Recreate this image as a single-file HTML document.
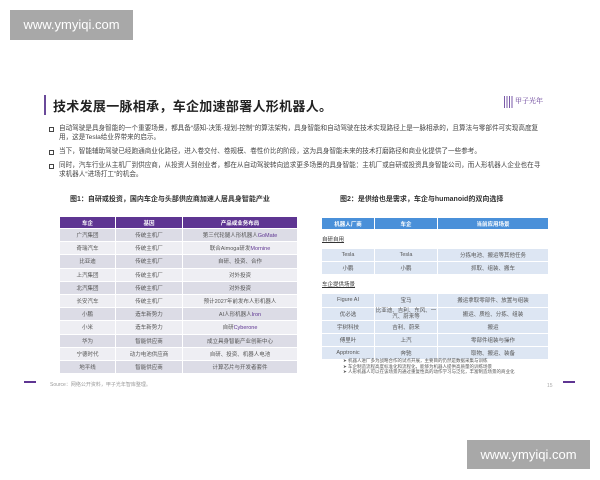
<!DOCTYPE html>
<html><head><meta charset="utf-8"><style>
*{margin:0;padding:0;box-sizing:border-box}
body{width:600px;height:480px;background:#fff;position:relative;overflow:hidden;font-family:"Liberation Sans","Noto Sans CJK SC",sans-serif;color:#333}
.a{position:absolute}
.wm{background:#a8a8a8;color:#fff;font-size:13px;text-align:center;line-height:30px}
.t{font-size:13px;font-weight:bold;color:#222;left:53px;top:96px;letter-spacing:0.3px}
.p{font-size:6.6px;line-height:8.6px;color:#444;left:59px;width:482px}
.sq{position:absolute;left:-10px;top:1.5px;width:5px;height:5px;border:1px solid #444}
table{border-collapse:separate;border-spacing:1px;font-size:5.5px;text-align:center;color:#555}
td{height:12.2px;padding:0}
.t1 th{background:#5e3592;color:#fff;height:11px;font-weight:bold}
.t1 tr:nth-child(even) td{background:#dcdce6}
.t1 tr:nth-child(odd) td{background:#eeeef3}
.t2 th{background:#4a90d9;color:#fff;height:11px;font-weight:bold}
.t2 td{background:#dde6f3}
.cap{font-size:7px;font-weight:bold;color:#333}
</style></head><body>
<div class="a wm" style="left:10px;top:10px;width:123px;height:30px">www.ymyiqi.com</div>
<div class="a wm" style="left:467px;top:440px;width:123px;height:29px">www.ymyiqi.com</div>

<div class="a" style="left:44px;top:95px;width:2px;height:20px;background:#6a4a9a"></div>
<div class="a t">技术发展一脉相承，车企加速部署人形机器人。</div>
<div class="a" style="left:504px;top:96px;width:9px;height:12px;background:repeating-linear-gradient(90deg,#7a5aa8 0 1px,transparent 1px 2.5px)"></div>
<div class="a" style="left:515px;top:96px;font-size:7px;color:#5e3592;font-family:'Noto Serif CJK SC',serif">甲子光年</div>

<div class="a p" style="top:125px"><span class="sq"></span>自动驾驶是具身智能的一个重要场景，都具备“感知-决策-规划-控制”的算法架构，具身智能和自动驾驶在技术实现路径上是一脉相承的，且算法与零部件可实现高度复用，这是Tesla给业界带来的启示。</div>
<div class="a p" style="top:148px"><span class="sq"></span>当下，智能辅助驾驶已经跑通商业化路径，进入卷交付、卷规模、卷性价比的阶段，这为具身智能未来的技术打磨路径和商业化提供了一些参考。</div>
<div class="a p" style="top:162px"><span class="sq"></span>同时，汽车行业从主机厂到供应商，从投资人到创业者，都在从自动驾驶转向追求更多场景的具身智能：主机厂或自研或投资具身智能公司，而人形机器人企业也在寻求机器人“进场打工”的机会。</div>

<div class="a cap" style="left:70px;top:194px">图1：自研或投资，国内车企与头部供应商加速人居具身智能产业</div>
<div class="a cap" style="left:340px;top:194px">图2：是供给也是需求，车企与humanoid的双向选择</div>

<table class="a t1" style="left:59px;top:216px;width:239px">
<tr><th style="width:55px">车企</th><th style="width:66px">基因</th><th>产品或业务布局</th></tr>
<tr><td>广汽集团</td><td>传统主机厂</td><td>第三代轮腿人形机器人<span style="color:#5e3592">GoMate</span></td></tr>
<tr><td>奇瑞汽车</td><td>传统主机厂</td><td>联合Aimoga研发<span style="color:#5e3592">Mornine</span></td></tr>
<tr><td>比亚迪</td><td>传统主机厂</td><td>自研、投资、合作</td></tr>
<tr><td>上汽集团</td><td>传统主机厂</td><td>对外投资</td></tr>
<tr><td>北汽集团</td><td>传统主机厂</td><td>对外投资</td></tr>
<tr><td>长安汽车</td><td>传统主机厂</td><td>预计2027年前发布人形机器人</td></tr>
<tr><td>小鹏</td><td>造车新势力</td><td>AI人形机器人<span style="color:#5e3592">Iron</span></td></tr>
<tr><td>小米</td><td>造车新势力</td><td>自研<span style="color:#5e3592">Cyberone</span></td></tr>
<tr><td>华为</td><td>智能供应商</td><td>成立具身智能产业创新中心</td></tr>
<tr><td>宁德时代</td><td>动力电池供应商</td><td>自研、投资、机器人电池</td></tr>
<tr><td>地平线</td><td>智能供应商</td><td>计算芯片与开发者套件</td></tr>
</table>

<table class="a t2" style="left:321px;top:217px;width:228px">
<tr><th style="width:52px">机器人厂商</th><th style="width:62px">车企</th><th>当前应用场景</th></tr>
<tr><td colspan="3" style="background:#fff;text-align:left;height:18px;text-decoration:underline;color:#333">自研自用</td></tr>
<tr><td>Tesla</td><td>Tesla</td><td>分拣电池、搬运等其他任务</td></tr>
<tr><td>小鹏</td><td>小鹏</td><td>抓取、组装、搬车</td></tr>
<tr><td colspan="3" style="background:#fff;text-align:left;height:18px;text-decoration:underline;color:#333">车企提供场景</td></tr>
<tr><td>Figure AI</td><td>宝马</td><td>搬运拿取零部件、放置与组装</td></tr>
<tr><td>优必选</td><td style="line-height:6px">比亚迪、吉利、东风、一汽、蔚来等</td><td>搬运、质检、分拣、组装</td></tr>
<tr><td>宇树科技</td><td>吉利、蔚来</td><td>搬运</td></tr>
<tr><td>傅里叶</td><td>上汽</td><td>零部件组装与操作</td></tr>
<tr><td>Apptronic</td><td>奔驰</td><td>取物、搬运、装备</td></tr>
</table>
<div class="a" style="left:343px;top:358px;font-size:4.5px;line-height:5.5px;color:#555">
➤ 机器人进厂多为战略合作的试点开展，主要目的仍然是数据采集与训练<br>
➤ 车企制造流程高度标准化和流程化，能够为机器人提供高质量的训练场景<br>
➤ 人形机器人可以在该场景内通过重复性高的动作学习与泛化，丰富制造场景的商业化</div>

<div class="a" style="left:24px;top:381px;width:12px;height:2px;background:#5e3592"></div>
<div class="a" style="left:50px;top:381px;font-size:5px;color:#999">Source：网络公开资料，甲子光年智库整理。</div>
<div class="a" style="left:547px;top:383px;font-size:5px;color:#aaa">15</div>
<div class="a" style="left:563px;top:381px;width:12px;height:2px;background:#5e3592"></div>
</body></html>
